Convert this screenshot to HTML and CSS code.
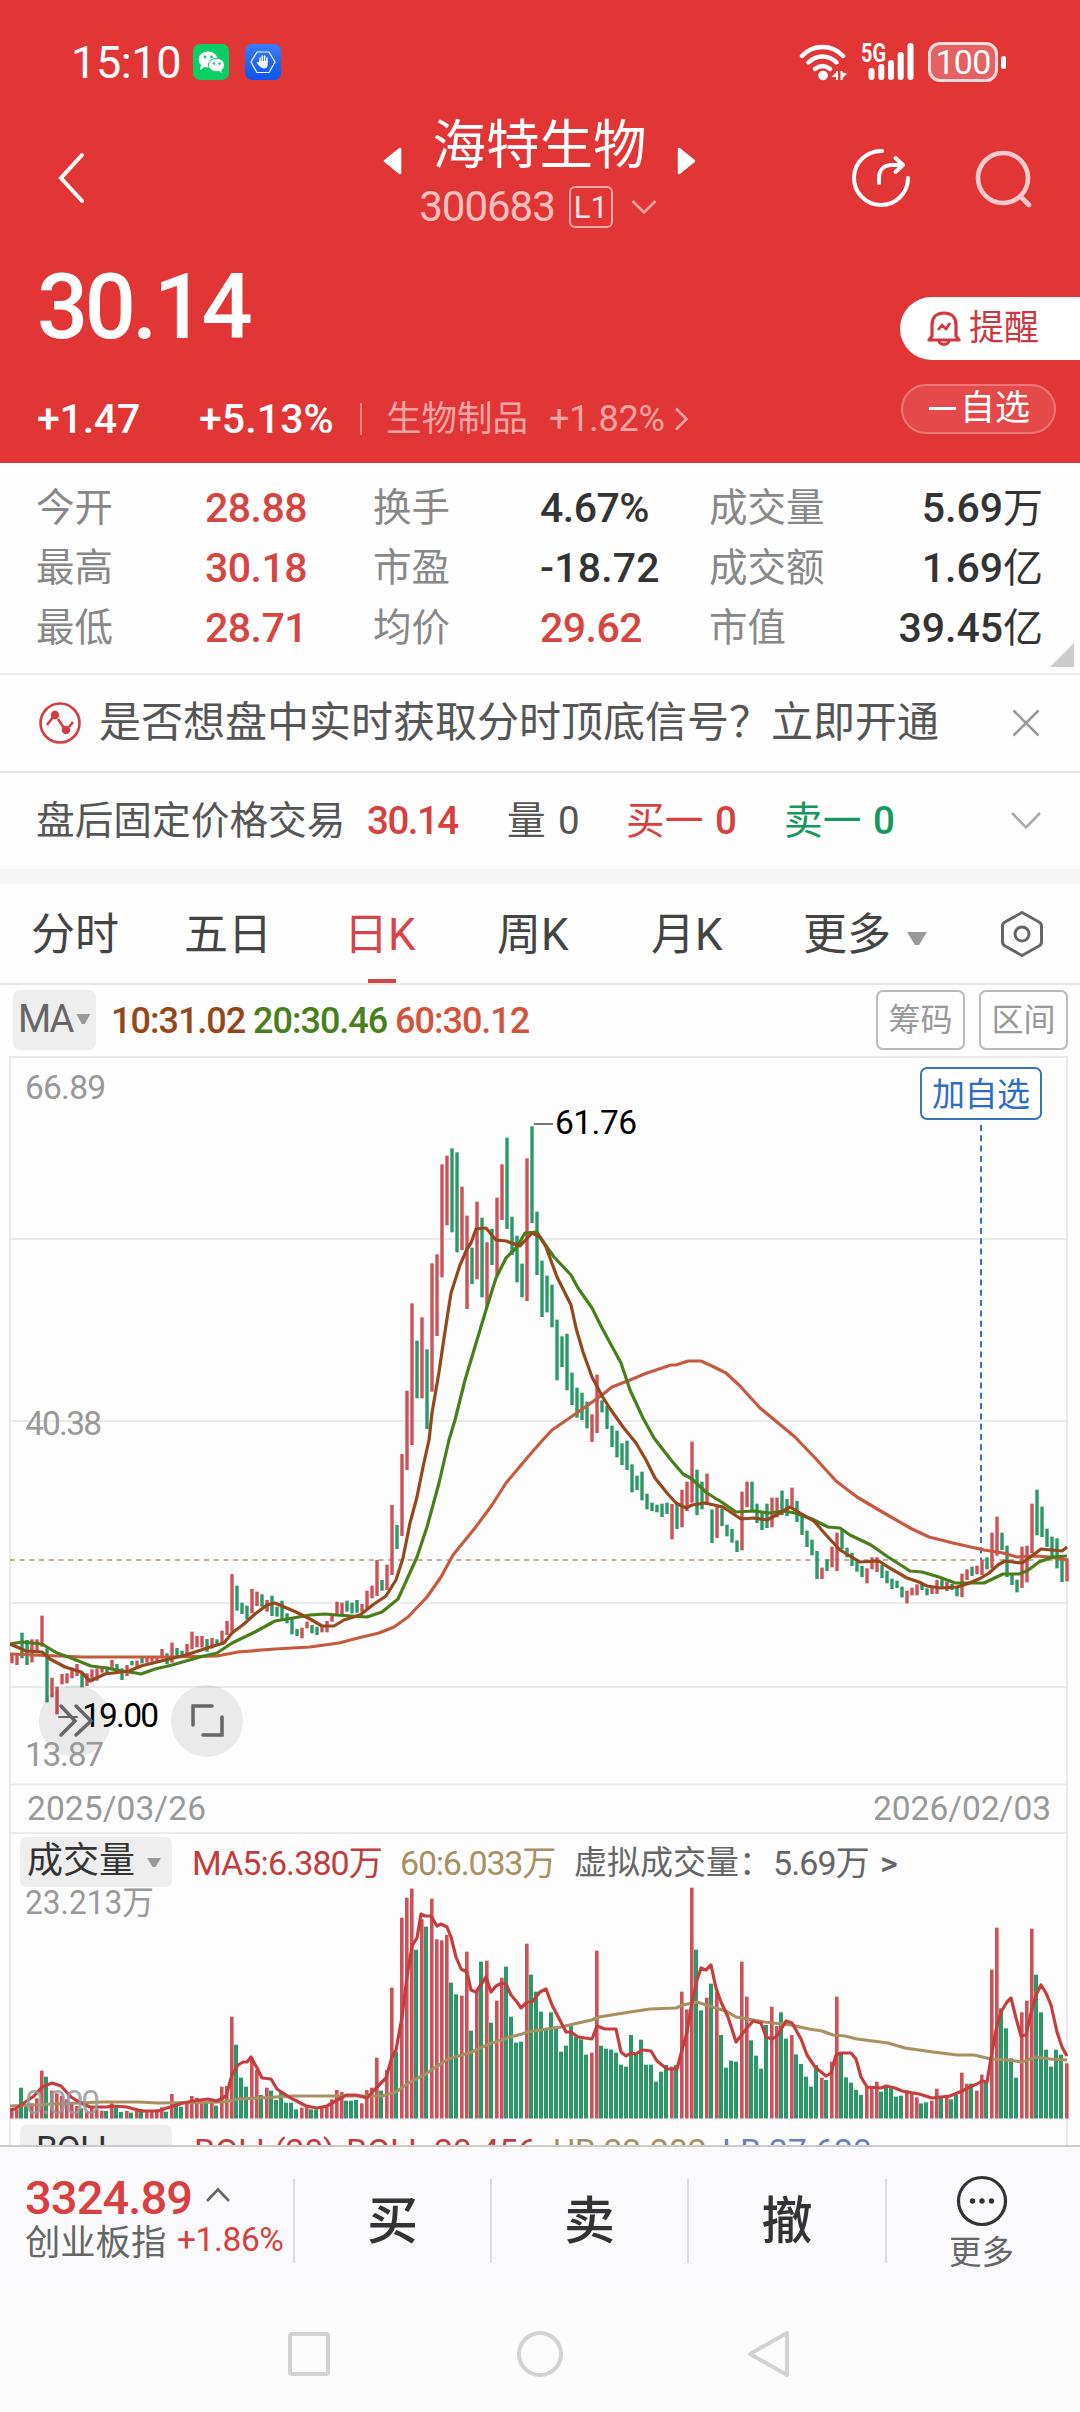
FILE: index.html
```html
<!DOCTYPE html>
<html lang="zh-CN">
<head>
<meta charset="utf-8">
<title>海特生物 300683</title>
<link rel="stylesheet" href="styles.css">
</head>
<body>
<header class="top">
  <div class="status">
    <span class="clock">15:10</span>
    <svg class="app-wechat" width="36" height="36" viewBox="0 0 36 36"><rect width="36" height="36" rx="7" fill="#07cf66"/><ellipse cx="15" cy="15.500" rx="9.500" ry="8" fill="#fff"/><path d="M8 21l-1 5 5-3z" fill="#fff"/><ellipse cx="23.500" cy="21" rx="8" ry="6.800" fill="#fff" stroke="#07cf66"/><path d="M26 26l2.500 3.500v-5z" fill="#fff"/><g fill="#07cf66"><circle cx="12" cy="13" r="1.400"/><circle cx="18.500" cy="13" r="1.400"/><circle cx="21" cy="19.500" r="1.200"/><circle cx="26.500" cy="19.500" r="1.200"/></g></svg>
    <svg class="app-guard" width="36" height="36" viewBox="0 0 36 36"><defs><linearGradient id="guard" x2="0" y2="1"><stop stop-color="#3a7bfb"/><stop offset="1" stop-color="#0b55e8"/></linearGradient></defs><rect width="36" height="36" rx="7" fill="url(#guard)"/><path d="M12 8h12l6 10-6 10.500H12L6 18z" fill="none" stroke="#fff" stroke-width="1.200"/><g stroke="#fff" stroke-width="1.500" stroke-linecap="round"><path d="M15 18v-4M17.300 17v-5M19.600 17v-5M21.900 18v-4M12.600 18.500l2.400 3"/></g><path d="M14.300 17h8.300v4c0 2.500-1.600 3.500-4 3.500S14.500 22 13.500 19z" fill="#fff"/></svg>
    <span class="spacer"></span>
    <svg width="48" height="38" viewBox="0 0 48 38"><g fill="none" stroke="#fff" stroke-width="4.400" stroke-linecap="round"><path d="M3 13c11-12 30-12 41 0M9.500 19.500c8-8 20-8 28 0M16 26c5-4 10-4 15 0"/></g><circle cx="24" cy="32.500" r="4.800" fill="#fff"/><path d="M38 28v9M42.500 28v9" stroke="#fff" stroke-width="2"/><path d="M38.500 28v6h-6zM42 29l6 1.500-6 6.500z" fill="#fff"/></svg>
    <svg class="signal" width="56" height="38" viewBox="0 0 56 38"><text x="1" y="18.500" class="net" textLength="25" lengthAdjust="spacingAndGlyphs">5G</text><g fill="#fff"><rect x="8.500" y="25" width="6" height="12" rx="3"/><rect x="18.300" y="21" width="6" height="16" rx="3"/><rect x="28" y="17" width="6" height="20" rx="3"/><rect x="37.700" y="9" width="6" height="28" rx="3"/><rect x="47.500" y="0" width="6" height="37" rx="3"/></g></svg>
    <span class="battery">100</span><i class="nub"></i>
  </div>
  <div class="titlebar">
    <svg class="back" width="30" height="52" viewBox="0 0 30 52"><path d="M26 3L5 26l21 23" fill="none" stroke="#fff" stroke-width="4" stroke-linecap="round"/></svg>
    <svg class="prev" width="20" height="28" viewBox="0 0 20 28"><path d="M17 2v24L2 14z" fill="#fff" stroke="#fff" stroke-width="2.500" stroke-linejoin="round"/></svg>
    <div class="name"><h1>海特生物</h1><div class="code">300683<b>L1</b><svg width="26" height="16" viewBox="0 0 26 16"><path d="M1.500 2L13 13.500 24.500 2" fill="none" stroke="#f2a3a3" stroke-width="2.500"/></svg></div></div>
    <svg class="next" width="20" height="28" viewBox="0 0 20 28"><path d="M3 2v24l15-12z" fill="#fff" stroke="#fff" stroke-width="2.500" stroke-linejoin="round"/></svg>
    <svg class="share" width="60" height="60" viewBox="0 0 60 60"><g fill="none" stroke="#fff" stroke-width="4" stroke-linecap="round" stroke-linejoin="round"><path d="M31 3A27 27 0 1 0 57 30"/><path d="M28 35v-5c0-9 6-13 13-13h10M44.500 10L52 17l-7.500 7"/></g></svg>
    <svg class="find" width="58" height="60" viewBox="0 0 58 60"><g fill="none" stroke="#f8cccc" stroke-width="4.600" stroke-linecap="round"><circle cx="28" cy="29" r="25"/><path d="M46 48l8 8"/></g></svg>
  </div>
  <div class="price"><strong>30.14</strong>
    <span class="remind"><svg width="34" height="36" viewBox="0 0 34 36"><g fill="none" stroke="#d2393f" stroke-width="3.200" stroke-linejoin="round"><path d="M5 25V14C5 6 10 2 17 2s12 4 12 12v11l3 4H2zM12 29c0 6 10 6 10 0"/><path d="M11 19l4-5 4 4 4-6" stroke-width="2.800"/></g></svg>提醒</span>
  </div>
  <div class="change"><span class="diff">+1.47</span><span class="pct">+5.13%</span><i></i><span class="sector">生物制品</span><span class="spct">+1.82%</span><svg width="16" height="24" viewBox="0 0 16 24"><path d="M2 1.500L12.500 12 2 22.500" fill="none" stroke="#f5a5a5" stroke-width="2.600"/></svg><span class="fav"><i></i>自选</span></div>
</header>

<section class="stats">
  <span>今开</span><b class="up">28.88</b><span>换手</span><b>4.67%</b><span>成交量</span><b class="end">5.69<em>万</em></b>
  <span>最高</span><b class="up">30.18</b><span>市盈</span><b>-18.72</b><span>成交额</span><b class="end">1.69<em>亿</em></b>
  <span>最低</span><b class="up">28.71</b><span>均价</span><b class="up">29.62</b><span>市值</span><b class="end">39.45<em>亿</em></b>
  <i class="corner"></i>
</section>
<section class="notice">
  <svg width="42" height="42" viewBox="0 0 42 42"><g fill="none" stroke="#d43c42" stroke-width="2.600"><circle cx="21" cy="21" r="19.500"/><path d="M8 23l6-8M19 17l6 9M30 25l4-5"/></g><circle cx="16" cy="13" r="4.200" fill="#d43c42"/><circle cx="27" cy="28" r="4.200" fill="#d43c42"/></svg>
  <span>是否想盘中实时获取分时顶底信号？立即开通</span>
  <svg width="28" height="28" viewBox="0 0 28 28"><path d="M1.500 1.500l25 25M26.500 1.500l-25 25" stroke="#999" stroke-width="2.600"/></svg>
</section>
<section class="after">
  <span>盘后固定价格交易</span><b class="up">30.14</b><span>量</span><b>0</b><span class="up">买一</span><b class="up">0</b><span class="down">卖一</span><b class="down">0</b>
  <svg width="32" height="20" viewBox="0 0 32 20"><path d="M2 2l14 14.500L30 2" fill="none" stroke="#aaa" stroke-width="2.600"/></svg>
</section>
<nav class="tabs">
  <span>分时</span><span>五日</span><span class="on">日K</span><span>周K</span><span>月K</span><span>更多<i class="tri"></i></span>
  <svg width="44" height="48" viewBox="0 0 44 48"><g fill="none" stroke="#666" stroke-width="3"><path d="M22 2.500l17 9.500q2.500 1.500 2.500 4v16q0 2.500-2.500 4l-17 9.500-17-9.500q-2.500-1.500-2.500-4V16q0-2.500 2.500-4z" stroke-linejoin="round"/><circle cx="22" cy="24" r="7"/></g></svg>
</nav>
<div class="legend">
  <span class="pick">MA<i class="tri"></i></span><b class="m10">10:31.02</b><b class="m20">20:30.46</b><b class="m60">60:30.12</b><span class="box">筹码</span><span class="box">区间</span>
</div>
<main class="panel">
  <svg class="plot" width="1055" height="774" viewBox="11 1058 1055 774">
    <g class="grid"><path d="M11 1239H1066M11 1421H1066M11 1603H1066M11 1687H1066M11 1784.500H1066"/></g>
    <path d="M10 1560H1066" stroke="#beb398" stroke-width="2" stroke-dasharray="5 4.700"/>
    <path d="M981 1125V1560" stroke="#3c72b8" stroke-width="2" stroke-dasharray="6 4.300"/>
    <g class="axis"><text x="25" y="1099" textLength="81">66.89</text><text x="25" y="1435" textLength="77">40.38</text></g>
    <g id="candles"></g>
    <g class="line">
      <polyline stroke="#c65a40" points="10,1654 34,1655 83,1657 172,1657 217,1656 238,1652 275,1649 310,1647 339,1643 358,1638 379,1633 394,1627 408,1617 427,1597 441,1577 453,1555 475,1528 492,1505 506,1483 527,1458 540,1443 552,1430 571,1417 588,1405 602,1395 612,1387 630,1380 647,1373 659,1369 671,1365 676,1365 688,1361 701,1361 712,1366 726,1373 740,1386 760,1408 795,1437 817,1460 836,1481 857,1497 884,1513 912,1529 929,1537 953,1543 984,1550 1003,1553 1017,1557 1036,1556 1050,1557 1067,1560"/>
      <polyline stroke="#487f1a" points="10,1644 22,1642 42,1644 57,1653 71,1658 91,1666 107,1668 121,1671 136,1673 141,1674 155,1669 172,1665 200,1657 217,1653 232,1643 255,1632 275,1621 293,1618 310,1615 325,1614 336,1615 367,1617 382,1612 398,1599 408,1577 417,1557 427,1527 439,1483 449,1440 455,1420 465,1380 477,1340 486,1310 496,1278 506,1258 517,1247 525,1233 537,1232 540,1237 554,1257 571,1275 578,1288 592,1308 602,1328 621,1363 630,1390 643,1418 654,1438 671,1460 683,1474 692,1479 707,1493 723,1503 736,1512 754,1511 769,1513 784,1511 795,1513 812,1519 828,1527 840,1528 850,1535 871,1545 888,1557 910,1571 922,1572 939,1577 955,1583 984,1583 1003,1574 1019,1574 1027,1571 1039,1562 1053,1557 1067,1556"/>
      <polyline stroke="#94481c" points="10,1644 26,1651 42,1652 50,1659 65,1667 81,1672 90,1681 105,1674 129,1671 141,1666 165,1660 186,1655 207,1648 224,1643 232,1633 244,1624 255,1614 267,1605 275,1603 296,1612 310,1619 322,1626 334,1626 344,1620 360,1615 374,1604 386,1596 396,1580 403,1558 410,1523 417,1497 423,1467 429,1440 432,1413 439,1372 444,1338 451,1293 460,1265 467,1249 471,1243 476,1229 486,1228 496,1240 506,1241 520,1246 532,1233 540,1237 546,1247 557,1277 571,1305 576,1328 583,1352 592,1377 602,1396 611,1410 623,1427 636,1443 646,1460 655,1478 667,1493 676,1503 686,1508 692,1505 705,1503 723,1507 741,1519 754,1518 767,1520 778,1514 790,1507 800,1513 814,1521 826,1535 840,1550 860,1562 879,1561 888,1567 907,1578 919,1582 927,1586 941,1588 957,1587 967,1584 981,1578 989,1573 998,1565 1005,1561 1022,1563 1029,1558 1041,1549 1062,1551 1067,1547"/>
    </g>
    <path d="M534 1124H553" stroke="#777" stroke-width="2"/>
    <text class="mark" x="555" y="1134" textLength="82">61.76</text>
    <g fill="#000" fill-opacity=".075"><circle cx="75" cy="1721" r="36"/><circle cx="207" cy="1721" r="36"/></g>
    <text class="mark" x="82" y="1727" textLength="77">19.00</text>
    <g fill="none" stroke="#666" stroke-width="3.500" stroke-linecap="round"><path d="M61 1706l14 15-14 14M76 1706l15 15-15 14"/><path d="M59 1717H77" stroke-width="2"/><path d="M212 1706H193V1725M203 1735H222V1717"/></g>
    <text class="axis" x="25" y="1766" textLength="79">13.87</text>
    <rect x="921" y="1068" width="120" height="51" rx="6" fill="#fff" stroke="#3c72b8" stroke-width="2"/>
    <text class="watch" x="932" y="1106" textLength="98">加自选</text>
    <text class="axis" x="27" y="1820" textLength="179">2025/03/26</text><text class="axis" x="873" y="1820" textLength="178">2026/02/03</text>
  </svg>
  <div class="volhead"><span class="pick">成交量<i class="tri"></i></span><b class="v5">MA5:6.380万</b><b class="v60">60:6.033万</b><b class="virtual">虚拟成交量：</b><b class="vnow">5.69万</b><b class="more">&gt;</b></div>
  <svg class="plot" width="1055" height="238" viewBox="11 1887 1055 238">
    <text class="axis" x="25" y="1914" textLength="129" lengthAdjust="spacingAndGlyphs">23.213万</text>
    <g id="volumes"></g>
    <g class="line">
      <polyline stroke="#a89062" points="10,2106 34,2105 52,2104 103,2102 138,2102 158,2103 224,2102 238,2099 258,2098 293,2096 344,2096 382,2096 396,2092 410,2082 424,2075 448,2059 472,2052 489,2044 510,2037 522,2034 527,2032 540,2030 561,2027 578,2023 592,2020 599,2017 630,2012 650,2009 676,2008 683,2005 697,2002 709,2006 726,2011 736,2017 764,2022 791,2025 809,2029 822,2031 833,2035 845,2036 857,2039 888,2043 905,2048 933,2052 957,2055 974,2055 991,2059 1008,2060 1022,2062 1036,2057 1050,2059 1067,2060"/>
      <polyline stroke="#c53d3d" points="10,2110 15,2109 21,2105 34,2096 42,2087 52,2083 61,2086 71,2097 81,2103 90,2107 107,2107 112,2106 127,2107 141,2111 158,2111 170,2107 183,2103 193,2101 208,2099 217,2101 226,2096 232,2075 238,2065 243,2062 247,2062 251,2057 257,2068 262,2078 271,2079 277,2089 289,2097 306,2106 317,2108 327,2106 341,2098 346,2095 356,2095 367,2098 377,2087 386,2078 392,2057 396,2050 402,2017 407,1977 412,1946 417,1938 421,1914 425,1916 431,1916 437,1926 441,1924 447,1927 451,1937 456,1957 461,1969 467,1972 471,1990 476,1992 486,1977 491,1992 496,1986 502,1983 506,1984 511,1995 517,2002 521,2008 527,2002 532,2002 540,1992 546,1989 552,2005 566,2032 571,2032 578,2037 592,2039 597,2026 605,2029 616,2029 621,2052 626,2056 631,2053 636,2054 642,2050 651,2051 657,2061 667,2069 677,2069 682,2050 687,2032 692,2002 697,1980 701,1968 706,1970 711,1965 716,1988 721,2002 728,2017 736,2042 747,2028 753,2021 761,2023 766,2037 772,2039 777,2036 786,2021 792,2023 801,2039 807,2055 815,2067 826,2076 831,2073 836,2055 841,2053 851,2053 856,2059 861,2077 867,2087 881,2088 886,2086 895,2088 902,2091 919,2094 932,2098 950,2096 962,2091 972,2086 977,2084 982,2081 987,2082 991,2058 996,2030 1001,2012 1007,2002 1011,1998 1016,2018 1021,2036 1026,2035 1031,2013 1036,1995 1041,1985 1046,1993 1051,2005 1057,2032 1062,2047 1067,2056"/>
    </g>
    <text class="axis zero" x="25" y="2114" textLength="75">0.000</text>
  </svg>
  <div class="boll"><span class="pick">BOLL</span><b class="b0">BOLL(20)</b><b class="b1">BOLL:30.456</b><b class="b2">UB:33.282</b><b class="b3">LB:27.630</b></div>
</main>
<footer class="actions">
  <div class="index"><div><b>3324.89</b><svg width="26" height="16" viewBox="0 0 26 16"><path d="M2 14L13 2.500 24 14" fill="none" stroke="#666" stroke-width="2.600"/></svg></div><div class="sub"><span>创业板指</span><em>+1.86%</em></div></div>
  <span>买</span><span>卖</span><span>撤</span>
  <div class="etc"><svg width="52" height="52" viewBox="0 0 52 52"><circle cx="26" cy="26" r="23.500" fill="none" stroke="#333" stroke-width="3.200"/><g fill="#333"><circle cx="16.500" cy="26" r="2.700"/><circle cx="26" cy="26" r="2.700"/><circle cx="35.500" cy="26" r="2.700"/></g></svg>更多</div>
</footer>
<div class="sysnav">
  <svg width="46" height="48" viewBox="0 0 46 48"><rect x="4" y="4" width="38" height="40" rx="2"/></svg>
  <svg width="48" height="48" viewBox="0 0 48 48"><circle cx="24" cy="24" r="21"/></svg>
  <svg width="46" height="48" viewBox="0 0 46 48"><path d="M41 3v42L4 24z" stroke-linejoin="round"/></svg>
</div>
<script src="chart.js"></script>
</body>
</html>
```
FILE: styles.css
```css
* { box-sizing: border-box; }
body { margin: 0; width: 1080px; height: 2412px; overflow: hidden; background: #fefefe; color: #333; font-family: Roboto, "Noto Sans CJK SC", sans-serif; }
svg { display: block; flex: none; }
b { font-weight: 500; }
i, em { font-style: normal; }
.up { color: #d8403f; }
.down { color: #16975c; }

.top { height: 463px; background: #e23636; color: #fff; display: flex; flex-direction: column; }
.status { height: 124px; padding: 0 74px 0 71px; display: flex; align-items: center; }
.clock { width: 122px; padding-top: 2px; font-size: 45px; letter-spacing: -.4px; line-height: 50px; }
.app-guard { margin-left: 16px; }
.spacer { flex: 1; }
.signal { margin-left: 13px; overflow: visible; }
.net { font-size: 25px; font-weight: 700; fill: #fff; }
.battery { width: 70px; height: 40px; margin-left: 12px; border: 3px solid #fbdcdc; border-radius: 12px; background: #e66161; font-size: 34px; font-weight: 400; line-height: 35px; text-align: center; letter-spacing: -.8px; }
.nub { width: 5px; height: 13px; margin-left: 3px; border-radius: 3px; background: #fff; }
.titlebar { height: 120px; padding-left: 56px; display: flex; align-items: flex-start; }
.back { margin-top: 28px; }
.prev { margin: 23px 0 0 297px; }
.name { width: 273px; height: 120px; display: flex; flex-direction: column; align-items: center; }
h1 { margin: -13px 0 0; font-size: 53.500px; font-weight: 400; line-height: 70px; }
.code { margin: 5px 0 0 -3px; display: flex; align-items: center; font-size: 42px; letter-spacing: -1px; line-height: 42px; color: #f9c0c0; }
.code b { width: 44px; height: 42px; margin: 0 18px 0 14px; border: 2px solid #f4aaaa; border-radius: 6px; font-size: 31px; font-weight: 400; line-height: 39px; text-align: center; color: #fde5e5; letter-spacing: 0; }
.next { margin-top: 23px; }
.share { margin: 24px 0 0 155px; }
.find { margin: 25px 0 0 64px; }
.price { height: 136px; padding-left: 37px; display: flex; align-items: flex-start; justify-content: space-between; }
.price strong { margin-top: 12px; font-size: 90px; font-weight: 500; line-height: 104px; letter-spacing: -3.500px; }
.remind { width: 180px; height: 63px; margin-top: 53px; padding-left: 27px; display: flex; align-items: center; gap: 8px; border-radius: 32px 0 0 32px; background: #fff; color: #cd383e; font-size: 35px; line-height: 60px; }
.change { height: 77px; padding-left: 37px; display: flex; align-items: center; font-size: 41px; font-weight: 500; line-height: 60px; }
.diff { width: 162px; letter-spacing: -.2px; }
.pct { width: 161px; letter-spacing: .1px; }
.change > i { width: 2px; height: 32px; margin-right: 24px; background: #ee8585; }
.sector { width: 163px; font-size: 35.500px; font-weight: 400; color: #f5a5a5; }
.spct { width: 125px; font-size: 36px; font-weight: 400; letter-spacing: -.2px; color: #f5a5a5; }
.fav { width: 155px; height: 50px; margin-left: auto; margin-right: 24px; margin-top: -20px; padding: 0 24px 0 26px; display: flex; align-items: center; justify-content: space-between; border: 2px solid #ee7777; border-radius: 25px; background: #e54a4a; font-size: 35px; font-weight: 400; line-height: 42px; }
.fav i { width: 27px; height: 3px; background: #fff; }

.stats { position: relative; height: 212px; padding: 15px 37px 0 36px; display: grid; grid-template: repeat(3, 60px) / 169px 168px 167px 169px 150px 1fr; border-bottom: 2px solid #ebebeb; font-size: 38.500px; line-height: 60px; color: #888; white-space: nowrap; }
.stats b { font-size: 41px; font-weight: 500; letter-spacing: -.5px; color: #333; }
.stats b:nth-of-type(5) { letter-spacing: .2px; }
.stats b.up { color: #d64540; }
.stats .end { text-align: right; letter-spacing: 0; }
.stats em { font-size: 40px; font-weight: 400; }
.corner { position: absolute; right: 6px; bottom: 6px; width: 24px; height: 24px; background: #ccc; clip-path: polygon(100% 0, 100% 100%, 0 100%); }
.notice { height: 98px; padding: 0 40px 0 39px; display: flex; align-items: center; border-bottom: 2px solid #e6e6e6; font-size: 42px; line-height: 60px; color: #555; }
.notice span { flex: 1; margin-left: 18px; white-space: nowrap; }
.after { height: 96px; padding-left: 36px; display: grid; grid-template-columns: 331px 140px 51px 68px 89px 69px 89px 137px 32px; align-items: center; font-size: 38.700px; line-height: 60px; color: #555; white-space: nowrap; }
.after b { font-size: 38.500px; letter-spacing: -1.500px; }
.after b:nth-of-type(2) { font-weight: 400; }
.tabs { height: 116px; padding: 17px 38px 0 31px; border-top: 15px solid #f7f7f7; border-bottom: 2px solid #e8e8e8; display: grid; grid-template-columns: 153px 160px 153px 154px 152px 197px 44px; font-size: 44px; line-height: 68px; color: #444; white-space: nowrap; }
.tabs svg { margin-top: 9px; }
.tabs .on { position: relative; height: 83px; color: #d9434a; }
.on::after { content: ""; position: absolute; left: 24px; bottom: 1px; width: 28px; height: 4px; background: #d2434a; }
.tri { display: inline-block; width: 20px; height: 13px; background: #999; clip-path: polygon(0 0, 100% 0, 60% 100%, 40% 100%); }
.tabs .tri { margin: 0 0 5px 16px; }
.legend { height: 71px; padding: 5px 12px 0 13px; display: flex; font-size: 36px; line-height: 62px; }
.pick { background: #eee; border-radius: 7px; color: #333; white-space: nowrap; }
.legend .pick { width: 83px; height: 60px; padding-left: 5px; margin-right: 15px; color: #666; line-height: 58px; font-size: 38px; letter-spacing: -2px; }
.legend .tri { width: 14px; height: 10px; margin: 0 0 8px 4px; }
.legend b { width: 142px; letter-spacing: -1px; white-space: nowrap; }
.m10 { color: #954719; } .m20 { color: #487f1a; } .m60 { color: #d2543a; }
.legend .box { width: 89px; height: 60px; margin-left: 14px; border: 2px solid #bbb; border-radius: 7px; font-size: 32px; line-height: 56px; text-align: center; color: #999; }
.legend b + .box { margin-left: auto; }

.panel { height: 1089px; margin: 0 12px 0 9px; border: solid #ebebeb; border-width: 2px 2px 0; background: #fdfdfd; overflow: clip; overflow-clip-margin: 3px; }
.plot { overflow: visible; font-size: 34px; }
.grid { stroke: #ebebeb; stroke-width: 2; }
.axis { font-size: 33.500px; fill: #999; }
.zero { fill-opacity: .85; }
.mark { font-size: 33.500px; fill: #000; }
.watch { font-size: 33px; fill: #2f6cc8; }
.line { fill: none; stroke-width: 3.200; stroke-linejoin: round; }
.volhead { height: 55px; padding: 3px 0 0 9px; border-top: 2px solid #ebebeb; display: flex; font-size: 34px; line-height: 52px; white-space: nowrap; }
.volhead .pick { width: 152px; height: 50px; padding-left: 7px; font-size: 36px; line-height: 48px; }
.volhead .tri { width: 14px; height: 9px; margin: 0 0 6px 12px; }
.volhead b { font-weight: 400; }
.volhead .v5 { width: 208px; margin-left: 20px; color: #c23c3c; letter-spacing: -.9px; } .volhead .v60 { width: 174px; color: #a89062; letter-spacing: -1.200px; }
.virtual { width: 199px; color: #666; font-size: 33px; } .vnow { width: 107px; color: #666; letter-spacing: -.9px; } .volhead .more { color: #666; font-weight: 500; }
.boll { height: 20px; padding-left: 9px; display: flex; overflow: hidden; font-size: 34px; line-height: 52px; white-space: nowrap; }
.boll .pick { width: 152px; height: 50px; padding-left: 16px; margin-right: 22px; line-height: 50px; font-size: 35px; letter-spacing: -1px; }
.boll b { font-weight: 400; letter-spacing: -.3px; }
.b0 { width: 152px; color: #c23c3c; } .b1 { width: 207px; color: #c23c3c; } .b2 { width: 169px; color: #a89062; } .b3 { color: #6a80c0; }

.actions { height: 151px; border-top: 2px solid #ccc; background: #fafafc; display: grid; grid-template-columns: 295px 197px 197px 198px 1fr; }
.actions > * { height: 84px; margin-top: 32px; border-right: 2px solid #ddd; }
.actions > span { font-size: 51px; font-weight: 500; line-height: 86px; text-align: center; color: #333; }
.index { padding-left: 25px; color: #d8403f; white-space: nowrap; }
.index > div { display: flex; align-items: center; height: 38px; }
.index b { width: 180px; font-size: 47px; letter-spacing: -.9px; line-height: 38px; }
.index svg { margin-bottom: 6px; }
.index .sub { height: 45px; }
.sub span { width: 152px; font-size: 35.300px; color: #666; }
.sub em { font-size: 33.500px; letter-spacing: -.4px; }
.actions .etc { height: 112px; margin-top: 28px; padding-right: 4px; border: 0; display: flex; flex-direction: column; align-items: center; font-size: 32.500px; line-height: 52px; color: #666; }
.sysnav { height: 116px; background: #fcfcfc; padding-left: 286px; display: flex; align-items: center; gap: 184px; }
.sysnav svg { fill: none; stroke: #d2d2d2; stroke-width: 4; }
.sysnav svg:last-child { margin-left: -2px; }
```
FILE: chart.js
```js
// Each segment lists bars as colour + extents in thirds of a pixel below y0.
const candleSegments = [
  { y0: 1440, bars: "R640-670 R645-675 G578-655 G600-675 R598-667 R598-635 R527-620 G625-787 R713-772 R740-823 R702-733 R700-730 R683-715 R672-708 G695-742 R700-738 R688-725 R685-722 R680-698 G680-700 R660-690 G672-695 G685-720 R675-708 G663-676 R662-685 G650-670 R652-668 R652-665 R650-665 R627-655 G640-672 R608-668 G624-650 G632-648 R612-645 R575-628 R588-622 R588-622 G597-635 R594-625 G598-616 R572-614 R543-585 R402-575 G437-512 G488-522 G497-538 R447-520 R455-498 G463-500 R480-515 G467-528 G500-530 G482-538 G520-550 G533-583 G567-588 R563-595 R545-565 G555-580 G560-585 R555-577 R543-577 R520-545 R485-525 R488-525 G482-515 G488-520 G480-518 R492-515 R452-505 R437-475 R360-468 G420-452 R374-450 R195-405 G255-327 R42-288" },
  { y0: 1060, bars: "R992-1230 R730-1155 G842-1015 R772-1015 G868-1107 R610-995 R583-828 R313-652 R287-496 G265-517 G277-577 R380-570 R467-747 G563-672 R425-658 G473-712 R547-740 G507-615 R413-645 R313-480 G233-507 G470-585 G527-667 G611-712 R295-723 G199-489 G455-645 G602-771 G647-757 G674-802 G779-961 G829-921 G821-991 G938-1035 G983-1073 G998-1080 G1025-1105 R1063-1146 R944-1119 G1021-1057 G1037-1107 G1097-1161 G1112-1192 G1150-1215 G1142-1230" },
  { y0: 1440, bars: "G73-157 G107-150 G95-181 G161-208 G188-213 G194-217 G191-231 G188-222 R192-298 G190-267 R149-262 R125-213 R5-188 G89-225 G125-208 R101-195 G208-309 R200-294 G205-258 G254-289 G267-308 G301-336 R155-331 R125-202 G125-215 G191-249 G215-270 G191-264 R173-262 R173-232 G152-225 G177-228 R143-205 G183-246 G230-285 G272-321 G299-346 G333-417 R383-417 G358-393 R320-382 R278-393 G269-328 G323-352 G338-378 G358-395 G378-411 R385-430 R352-388 R352-396 G375-414 G392-430 G416-447 G422-444 G440-472 R452-490 R443-466 R433-466 G432-450 G445-466 R440-462 R420-462 G418-445 R425-453 G432-450 G440-469 R401-471 R388-420 G380-408 R377-403 R360-405 G352-388 R278-385 R230-347 G278-330 G317-411 G403-435 G419-457 R320-444 R317-427 R191-340 G149-286 G200-291 G266-321 G290-352 G295-385 G360-426 R355-424" }
];
const volumeTops = "870 868 803 855 850 835 752 770 812 820 828 838 850 858 865 875 862 868 872 873 850 862 876 873 878 865 867 870 872 868 862 875 822 858 860 850 828 833 838 845 838 857 800 798 590 674 773 800 715 750 825 803 812 840 815 848 848 868 863 862 868 868 858 855 838 810 816 842 842 840 850 810 803 713 812 750 503 695 293 233 206 389 298 320 236 358 361 345 488 523 527 395 632 510 425 422 608 542 473 440 590 668 665 371 464 515 575 625 577 620 695 677 617 650 658 704 698 392 677 686 689 698 734 740 645 703 659 734 734 785 755 735 740 735 515 568 203 389 571 533 491 515 645 743 722 725 425 530 661 707 746 615 560 618 577 656 645 703 732 770 800 735 773 780 725 530 698 772 788 810 825 800 803 785 815 800 805 830 827 812 818 832 850 847 842 806 830 825 838 825 758 791 791 812 764 780 449 323 565 625 715 773 577 542 326 464 577 689 740 689 704 730".split(" ").map(Number);

const RED = "#cf5056", GREEN = "#2b9967";
const SVG = "http://www.w3.org/2000/svg";

function bar(group, x, top, width, bottom, fill) {
  const r = document.createElementNS(SVG, "rect");
  r.setAttribute("x", x);
  r.setAttribute("y", top);
  r.setAttribute("width", width);
  r.setAttribute("height", bottom - top);
  r.setAttribute("fill", fill);
  group.appendChild(r);
}

const candles = document.getElementById("candles");
const volumes = document.getElementById("volumes");
let day = 0;
for (const segment of candleSegments) {
  for (const item of segment.bars.split(" ")) {
    const rising = item[0] === "R";
    const [high, low] = item.slice(1).split("-").map(Number);
    const x = 12 + day * 5;
    bar(candles, x - 1.7, segment.y0 + high / 3, 3.4, segment.y0 + low / 3, rising ? RED : GREEN);
    if (rising) {
      bar(volumes, x - 2, 1820 + volumeTops[day] / 3, 3.6, 2118.5, RED);
    } else {
      bar(volumes, x - 3, 1820 + volumeTops[day] / 3, 4, 2118.5, GREEN);
    }
    day++;
  }
}
```
